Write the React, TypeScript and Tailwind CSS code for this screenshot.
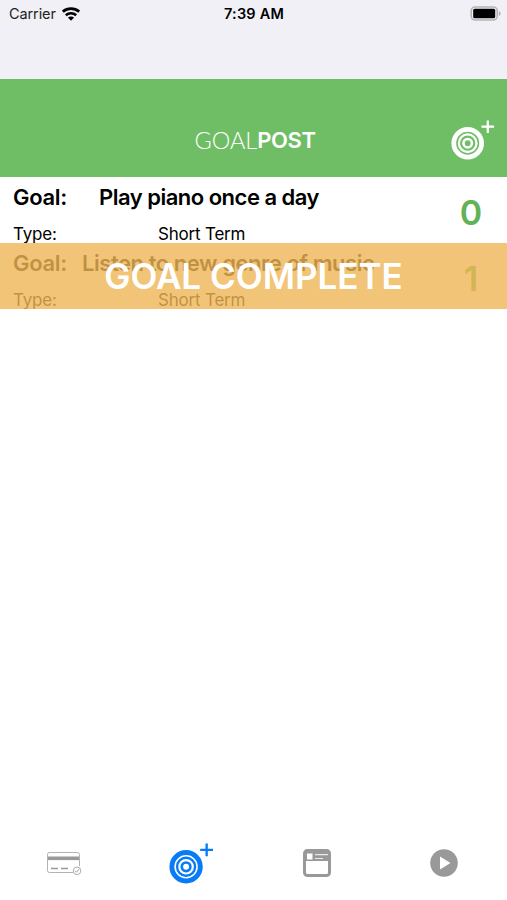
import type { ReactNode } from "react";

type Goal = {
  title: string;
  titleClassName: string;
  term: string;
  progress: number;
  complete: boolean;
};

const goals: Goal[] = [
  {
    title: "Play piano once a day",
    titleClassName: "pl-[32px] tracking-[-0.5px]",
    term: "Short Term",
    progress: 0,
    complete: false,
  },
  {
    title: "Listen to new genre of music",
    titleClassName: "pl-[15px] tracking-[-0.45px]",
    term: "Short Term",
    progress: 1,
    complete: true,
  },
];

export default function App() {
  return (
    <div className="flex h-[900px] w-[507px] flex-col overflow-hidden bg-white font-['Inter','Liberation_Sans',sans-serif] text-black">
      <StatusBar />
      <Header />
      <main className="flex-1">
        {goals.map((goal) => (
          <GoalRow goal={goal} key={goal.title} />
        ))}
      </main>
      <TabBar />
    </div>
  );
}

function StatusBar() {
  return (
    <div className="h-[79px] bg-[#f1f0f6]">
      <div className="grid h-[27px] grid-cols-3 items-center pr-[6px] pl-[9px]">
        <div className="flex items-center gap-[6px]">
          <span className="text-[14.5px] tracking-[-0.1px] text-[#222]">Carrier</span>
          <WifiIcon />
        </div>
        <span className="-ml-[2px] text-center text-[14.5px] font-semibold tracking-[0.2px] whitespace-nowrap">
          7:39 AM
        </span>
        <div className="flex justify-end">
          <BatteryIcon />
        </div>
      </div>
    </div>
  );
}

function Header() {
  return (
    <header className="grid h-[98px] grid-cols-[1fr_auto_1fr] bg-[#6fbe65] pt-[41px] text-white">
      <span />
      <h1 className="mt-[6px] ml-[3px] flex text-[22px] leading-7">
        <span className="font-['Lato',sans-serif] text-[23.5px] font-light">GOAL</span>
        <span className="font-semibold tracking-[-0.4px]">POST</span>
      </h1>
      <button aria-label="Add goal" className="mr-[13px] h-10 justify-self-end" type="button">
        <TargetPlusIcon className="h-10 w-[43px]" />
      </button>
    </header>
  );
}

function GoalRow({ goal }: { goal: Goal }) {
  return (
    <div className="relative flex h-[66px] overflow-hidden">
      <div className="flex-1 pl-[13px]">
        <div className="flex h-10 items-center text-[22px] font-semibold whitespace-nowrap">
          <span className="tracking-[-0.3px]">Goal:</span>
          <span className={goal.titleClassName}>{goal.title}</span>
        </div>
        <div className="flex h-8 items-center pt-[3px] text-[17px] tracking-[-0.2px]">
          <span className="w-[145px]">Type:</span>
          <span>{goal.term}</span>
        </div>
      </div>
      <div className="flex w-[72px] items-center justify-center pt-[5px] text-[34px] font-semibold text-[#62b257]">
        {goal.progress}
      </div>
      {goal.complete ? (
        <div className="absolute inset-0 flex items-center justify-center bg-[#efb555]/80 text-[35px] font-semibold text-white">
          GOAL COMPLETE
        </div>
      ) : null}
    </div>
  );
}

function TabBar() {
  return (
    <nav className="grid h-[74px] grid-cols-4 text-[#999]">
      <Tab label="Card">
        <CardIcon />
      </Tab>
      <Tab label="Goals">
        <TargetPlusIcon className="ml-px h-[41px] w-[44px] text-[#087bf7]" />
      </Tab>
      <Tab label="Browser">
        <WindowIcon />
      </Tab>
      <Tab label="Play">
        <PlayIcon />
      </Tab>
    </nav>
  );
}

function Tab({ label, children }: { label: string; children: ReactNode }) {
  return (
    <button aria-label={label} className="flex h-[74px] items-center justify-center" type="button">
      {children}
    </button>
  );
}

function TargetPlusIcon({ className }: { className: string }) {
  return (
    <svg className={className} fill="none" stroke="currentColor" viewBox="0 0 43 40">
      <circle cx="16.7" cy="23.2" r="13.9" strokeWidth="4.8" />
      <circle cx="16.7" cy="23.2" r="8.8" strokeWidth="2.3" />
      <circle cx="16.7" cy="23.2" r="4.2" strokeWidth="2.6" />
      <path d="M30.5 6.7H43M36.8 .5V13" strokeWidth="2.3" />
    </svg>
  );
}

function WifiIcon() {
  return (
    <svg className="h-[14px] w-[18px]" fill="none" stroke="black" viewBox="0 0 18 14">
      <path d="M.8 4.7C5.4.6 12.6.6 17.2 4.7" strokeWidth="2.7" />
      <path d="M3.8 8.2c2.9-2.6 7.5-2.6 10.4 0" strokeWidth="2.5" />
      <path d="M9 13.7 5.9 10.6c1.8-1.5 4.4-1.5 6.2 0Z" fill="black" stroke="none" />
    </svg>
  );
}

function BatteryIcon() {
  return (
    <svg className="h-[15px] w-[31px]" viewBox="0 0 31 15">
      <rect fill="#f1f0f6" height="13" rx="4" stroke="#b4b3b7" strokeWidth="1.6" width="26" x="1.2" y="1" />
      <rect height="9.4" rx="1.5" width="22" x="3.2" y="2.8" />
      <path d="M28.8 5v5c2.5-.8 2.5-4.2 0-5Z" fill="#b4b3b7" />
    </svg>
  );
}

function CardIcon() {
  return (
    <svg className="ml-[2px] h-6 w-[35px]" fill="none" stroke="currentColor" viewBox="0 0 35 24">
      <path d="M26 21.5H2.5a2 2 0 0 1-2-2v-16a2 2 0 0 1 2-2h28a2 2 0 0 1 2 2V15" strokeOpacity=".75" />
      <path d="M1 7.3h31" strokeWidth="3.6" />
      <path d="M4 17.5h7M14 17.5h7" strokeWidth="1.5" />
      <circle cx="30" cy="19.8" r="3.8" strokeOpacity=".8" />
      <path d="m28 19.8 1.5 1.5 2.5-3" />
    </svg>
  );
}

function WindowIcon() {
  return (
    <svg className="h-7 w-7" fill="none" stroke="currentColor" viewBox="0 0 28 28">
      <rect height="25" rx="3" strokeWidth="3" width="25" x="1.5" y="1.5" />
      <path d="M2 2h24v10H2z" fill="currentColor" stroke="none" />
      <path d="M4 4.5h5.5v6H4z" fill="white" stroke="none" />
      <path d="M12 5.7h13M12 9.5h8" stroke="white" strokeOpacity=".8" strokeWidth="1.2" />
    </svg>
  );
}

function PlayIcon() {
  return (
    <svg className="h-7 w-7" viewBox="0 0 28 28">
      <circle cx="14" cy="14" fill="currentColor" r="13.8" />
      <path d="M10 7.5v13L20.5 14Z" fill="white" />
    </svg>
  );
}
